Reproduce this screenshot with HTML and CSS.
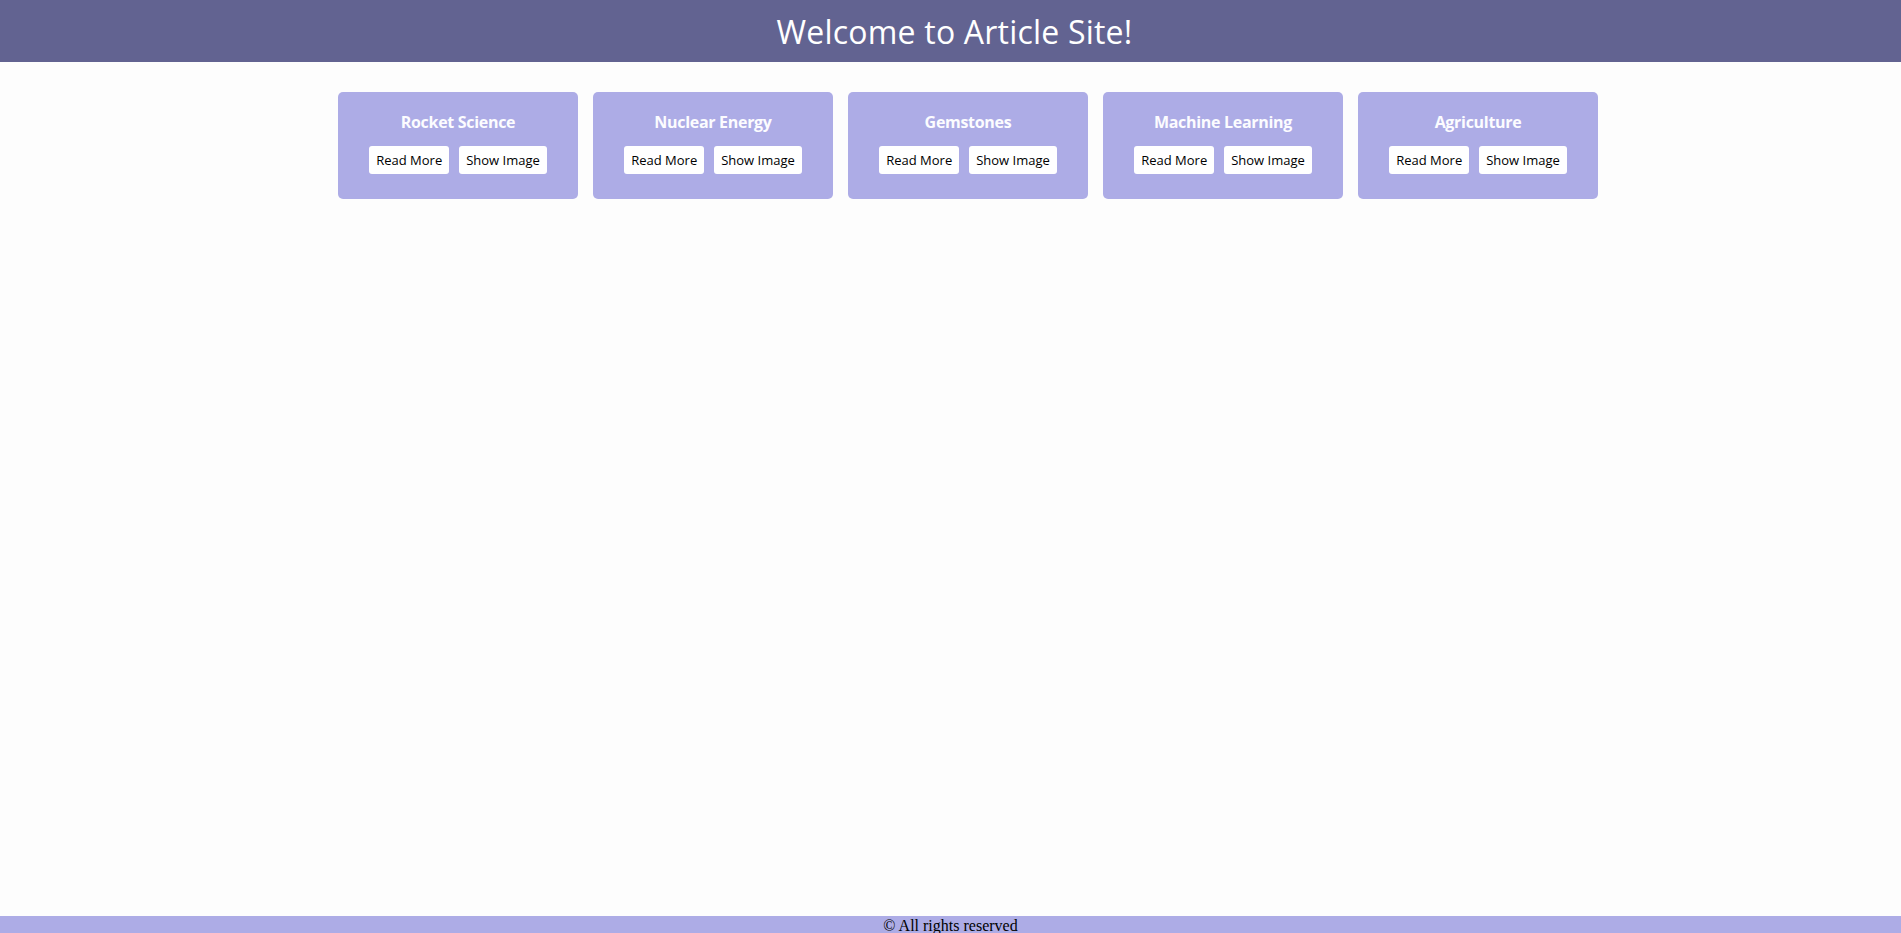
FILE: index.html
```html
<!DOCTYPE html>
<html>
<head>
<meta charset="utf-8">
<link rel="stylesheet" href="styles.css">
</head>
<body>
<div class="page">
  <header class="site-header">
    <h1 class="site-title">Welcome to Article Site!</h1>
  </header>
  <main class="cards">
    <div class="card">
      <h3 class="card-title">Rocket Science</h3>
      <div class="card-actions"><button class="btn">Read More</button><button class="btn">Show Image</button></div>
    </div>
    <div class="card">
      <h3 class="card-title">Nuclear Energy</h3>
      <div class="card-actions"><button class="btn">Read More</button><button class="btn">Show Image</button></div>
    </div>
    <div class="card">
      <h3 class="card-title">Gemstones</h3>
      <div class="card-actions"><button class="btn">Read More</button><button class="btn">Show Image</button></div>
    </div>
    <div class="card">
      <h3 class="card-title">Machine Learning</h3>
      <div class="card-actions"><button class="btn">Read More</button><button class="btn">Show Image</button></div>
    </div>
    <div class="card">
      <h3 class="card-title">Agriculture</h3>
      <div class="card-actions"><button class="btn">Read More</button><button class="btn">Show Image</button></div>
    </div>
  </main>
  <footer class="site-footer">© All rights reserved</footer>
</div>
</body>
</html>
```
FILE: styles.css
```css
html, body {
  margin: 0;
  padding: 0;
  background: #fdfdfd;
}
.page {
  min-height: 100vh;
  display: flex;
  flex-direction: column;
}
.site-header {
  background: #626391;
  height: 62px;
  display: flex;
  align-items: center;
  justify-content: center;
  padding-left: 8px;
}
.site-title {
  margin: 0;
  color: #ffffff;
  font-family: "Open Sans", sans-serif;
  font-weight: 500;
  font-size: 32px;
  letter-spacing: 0.2px;
}
.cards {
  flex: 1;
  display: flex;
  justify-content: center;
  align-items: flex-start;
  gap: 15px;
  padding: 30px 0 0 35px;
}
.card {
  width: 240px;
  height: 107px;
  box-sizing: border-box;
  background: #adace6;
  border-radius: 5px;
  display: flex;
  flex-direction: column;
  align-items: center;
  padding-top: 19px;
}
.card-title {
  margin: 0;
  color: #fcfcff;
  font-family: "Open Sans", sans-serif;
  font-weight: 700;
  font-size: 16px;
  line-height: 22px;
  letter-spacing: -0.3px;
}
.card-actions {
  display: flex;
  gap: 10px;
  margin-top: 13px;
}
.btn {
  height: 28px;
  padding: 0 7px;
  border: none;
  border-radius: 3px;
  background: #ffffff;
  color: #000000;
  font-family: "Open Sans", sans-serif;
  font-size: 13px;
  font-weight: 500;
}
.site-footer {
  background: #adace6;
  text-align: center;
  font-family: "Liberation Serif", serif;
  font-size: 16px;
  height: 17px;
  line-height: 19px;
  overflow: hidden;
  color: #000;
}
```
